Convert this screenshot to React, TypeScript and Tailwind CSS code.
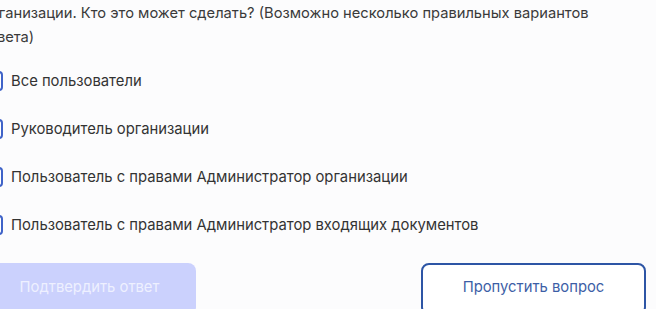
const options = [
  "Все пользователи",
  "Руководитель организации",
  "Пользователь с правами Администратор организации",
  "Пользователь с правами Администратор входящих документов",
];

export default function App() {
  return (
    <div
      className="h-[309px] w-[656px] overflow-hidden bg-[#fcfcfd]"
      style={{ fontFamily: "Inter, 'Noto Sans', sans-serif" }}
    >
      <div className="ml-[-17px] w-[663px] pt-[1px]">
        <p className="ml-[-2px] w-[640px] text-[14.7px] leading-[24px] text-[#3a3a3a]">
          организации. Кто это может сделать? (Возможно несколько правильных вариантов ответа)
        </p>

        <div className="mt-[22px] flex flex-col gap-[28px]">
          {options.map((label) => (
            <label key={label} className="flex h-[20px] items-center gap-[8px]">
              <span className="h-[20px] w-[20px] shrink-0 rounded-[4px] border-2 border-[#3f63c8] bg-white" />
              <span className="text-[14.8px] text-[#333]">{label}</span>
            </label>
          ))}
        </div>

        <div className="mt-[28px] flex justify-between">
          <button className="h-[52px] w-[213px] rounded-[8px] bg-[#cbd1fd] pb-[4px] text-[14.8px] text-[#eef0ff]">
            Подтвердить ответ
          </button>
          <button className="h-[52px] w-[225px] rounded-[8px] border-2 border-[#2d55a5] bg-white pb-[4px] text-[14.8px] text-[#3c5ea6]">
            Пропустить вопрос
          </button>
        </div>
      </div>
    </div>
  );
}
